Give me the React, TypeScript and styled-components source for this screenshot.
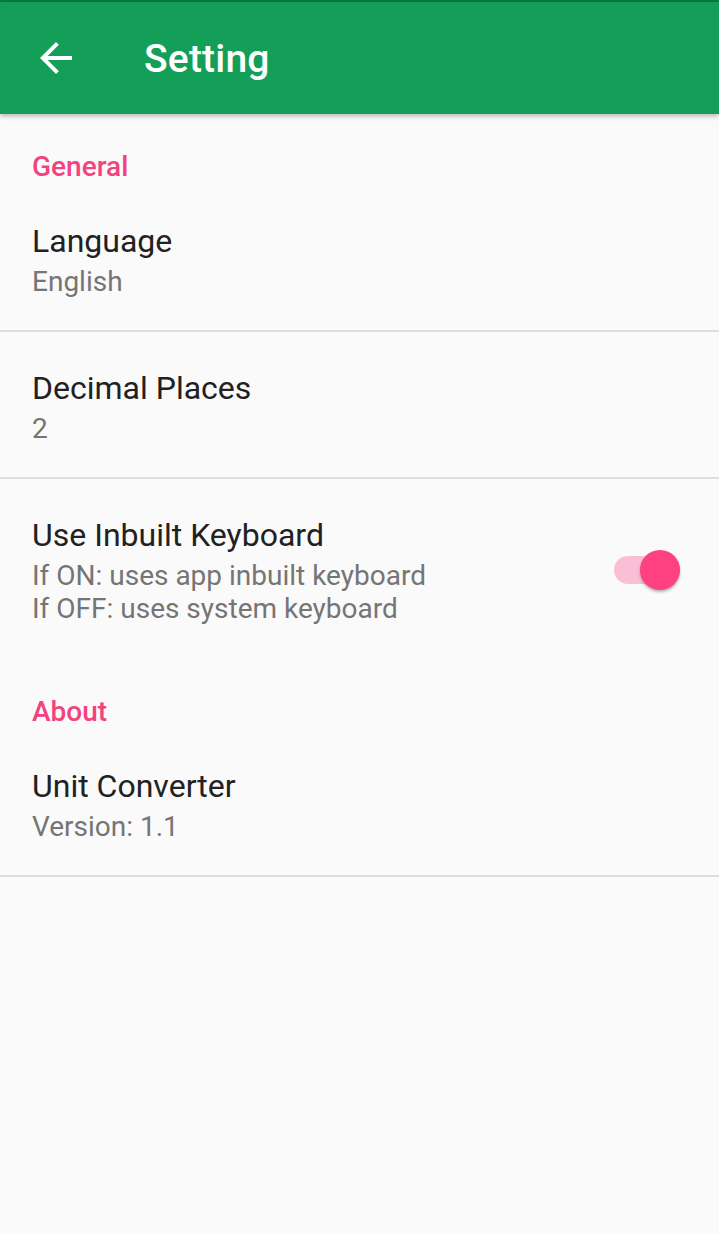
import React, { useState } from 'react'
import styled, { createGlobalStyle } from 'styled-components'

const GlobalStyle = createGlobalStyle`
  html, body {
    margin: 0;
    padding: 0;
    background: #fafafa;
  }
  body {
    font-family: Roboto, "Noto Sans", "Liberation Sans", sans-serif;
    -webkit-font-smoothing: antialiased;
  }
`

const Page = styled.div`
  width: 719px;
  min-height: 1234px;
  background: #fafafa;
  display: flex;
  flex-direction: column;
`

const StatusStrip = styled.div`
  height: 2px;
  background: #0b7a41;
`

const Toolbar = styled.header`
  height: 112px;
  background: #139f58;
  display: flex;
  align-items: center;
  padding-left: 32px;
  box-shadow: 0 2px 5px rgba(0, 0, 0, 0.28);
  position: relative;
  z-index: 1;
`

const BackButton = styled.button`
  width: 48px;
  height: 48px;
  padding: 0;
  border: none;
  background: transparent;
  display: flex;
  align-items: center;
  justify-content: center;
  cursor: pointer;
`

const Title = styled.h1`
  margin: 2px 0 0 64px;
  font-size: 39px;
  font-weight: 500;
  color: #ffffff;
  letter-spacing: 0.2px;
`

const Category = styled.div`
  padding: 37px 32px 2px;
  font-size: 28px;
  line-height: 32px;
  font-weight: 500;
  color: #f4427f;
`

const Row = styled.div<{ $divider?: boolean }>`
  display: flex;
  align-items: center;
  padding: 36px 39px 32px 32px;
  border-bottom: ${(p) => (p.$divider ? '2px solid #dedede' : '2px solid transparent')};
`

const TextBlock = styled.div`
  flex: 1;
  display: flex;
  flex-direction: column;
`

const ItemTitle = styled.div`
  font-size: 32px;
  line-height: 40px;
  color: #212121;
`

const Summary = styled.div`
  margin-top: 4px;
  font-size: 28px;
  line-height: 33px;
  color: #757575;
`

const SwitchTrack = styled.button<{ $on: boolean }>`
  position: relative;
  width: 66px;
  height: 28px;
  padding: 0;
  border: none;
  border-radius: 14px;
  background: ${(p) => (p.$on ? '#f9c0d5' : '#bdbdbd')};
  cursor: pointer;
`

const SwitchThumb = styled.span<{ $on: boolean }>`
  position: absolute;
  top: -6px;
  left: ${(p) => (p.$on ? '26px' : '-4px')};
  width: 40px;
  height: 40px;
  border-radius: 50%;
  background: ${(p) => (p.$on ? '#ff4081' : '#f1f1f1')};
  box-shadow: 0 2px 3px rgba(0, 0, 0, 0.28);
`

const BackIcon = () => (
  <svg width="48" height="48" viewBox="0 0 24 24" fill="#ffffff">
    <path d="M20 11H7.83l5.59-5.59L12 4l-8 8 8 8 1.41-1.41L7.83 13H20v-2z" />
  </svg>
)

export default function App() {
  const [keyboard, setKeyboard] = useState(true)

  return (
    <Page>
      <GlobalStyle />
      <StatusStrip />
      <Toolbar>
        <BackButton aria-label="Back">
          <BackIcon />
        </BackButton>
        <Title>Setting</Title>
      </Toolbar>

      <Category>General</Category>
      <Row $divider>
        <TextBlock>
          <ItemTitle>Language</ItemTitle>
          <Summary>English</Summary>
        </TextBlock>
      </Row>
      <Row $divider>
        <TextBlock>
          <ItemTitle>Decimal Places</ItemTitle>
          <Summary>2</Summary>
        </TextBlock>
      </Row>
      <Row>
        <TextBlock>
          <ItemTitle>Use Inbuilt Keyboard</ItemTitle>
          <Summary>
            If ON: uses app inbuilt keyboard
            <br />
            If OFF: uses system keyboard
          </Summary>
        </TextBlock>
        <SwitchTrack $on={keyboard} onClick={() => setKeyboard(!keyboard)} aria-label="Use Inbuilt Keyboard">
          <SwitchThumb $on={keyboard} />
        </SwitchTrack>
      </Row>

      <Category>About</Category>
      <Row $divider>
        <TextBlock>
          <ItemTitle>Unit Converter</ItemTitle>
          <Summary>Version: 1.1</Summary>
        </TextBlock>
      </Row>
    </Page>
  )
}
